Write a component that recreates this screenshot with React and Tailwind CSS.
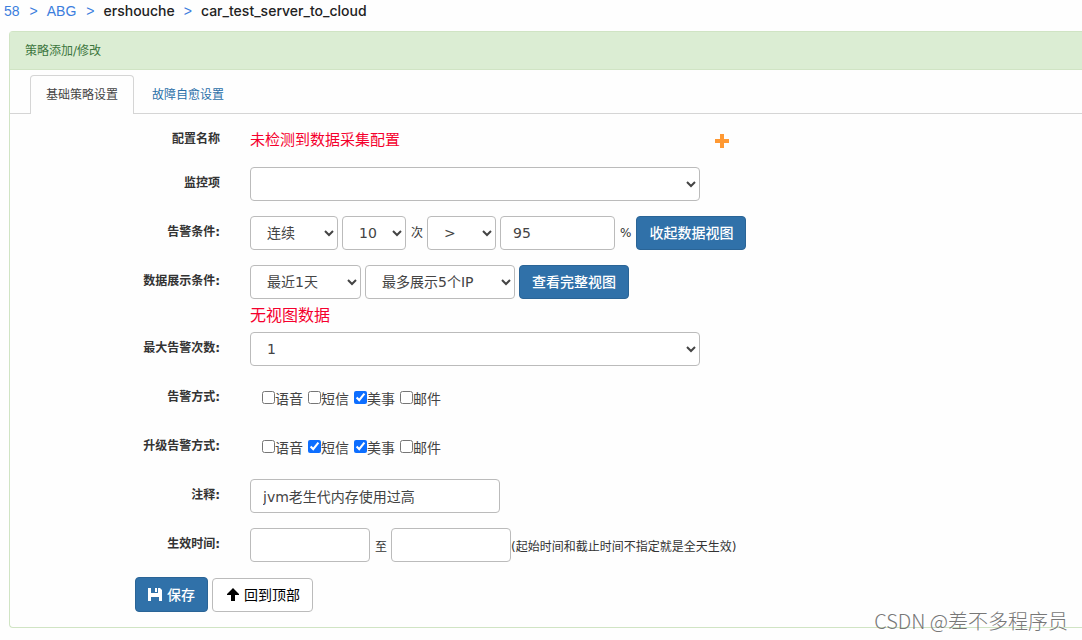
import React, { useState } from 'react'
import clsx from 'clsx'

const controlClass =
  'h-[34px] rounded-sm border border-[#bbb] bg-white px-3 text-sm text-[#444] outline-none'

const methods = ['语音', '短信', '美事', '邮件']

const Row = ({ label, htmlFor, labelId, children }) => (
  <div className="mb-[15px] flex">
    {htmlFor ? (
      <label htmlFor={htmlFor} className="w-[210px] shrink-0 pt-2 text-right text-xs leading-[17px] font-bold">
        {label}
      </label>
    ) : (
      <div id={labelId} className="w-[210px] shrink-0 pt-2 text-right text-xs leading-[17px] font-bold">
        {label}
      </div>
    )}
    <div className="min-w-0 flex-1 pl-[30px]">{children}</div>
  </div>
)

const Select = ({ className, options, ...props }) => (
  <select className={clsx(controlClass, className)} {...props}>
    {options.map((option) => (
      <option key={option}>{option}</option>
    ))}
  </select>
)

const PrimaryButton = ({ className, children }) => (
  <button
    type="button"
    className={clsx(
      'flex items-center rounded-sm border border-[#2a6496] bg-[#3071a9] px-3 text-sm font-medium text-white',
      className
    )}
  >
    {children}
  </button>
)

const MethodGroup = ({ labelId, initial }) => {
  const [selected, setSelected] = useState(initial)

  const toggle = (method) => {
    setSelected(
      selected.includes(method) ? selected.filter((m) => m !== method) : [...selected, method]
    )
  }

  return (
    <div role="group" aria-labelledby={labelId} className="flex h-[34px] items-center gap-[5px] pt-[2px] pl-3">
      {methods.map((method) => (
        <label key={method} className="flex items-center text-sm text-[#444]">
          <input
            type="checkbox"
            className="mb-[3px] h-[13px] w-[13px] accent-[#0d6eff]"
            checked={selected.includes(method)}
            onChange={() => toggle(method)}
          />
          {method}
        </label>
      ))}
    </div>
  )
}

export default function App() {
  const [threshold, setThreshold] = useState('95')
  const [remark, setRemark] = useState('jvm老生代内存使用过高')

  return (
    <div className="relative overflow-hidden bg-[#fefefe] pb-3 font-['DejaVu_Sans','Noto_Sans_CJK_SC',sans-serif] text-xs text-[#333]">
      {/*breadcrumb*/}
      <nav className="flex h-[31px] gap-[9px] pl-1 font-['Liberation_Sans',sans-serif] text-sm leading-[22px] text-[#3b7ddd]">
        <a href="#58" className="pr-px">58</a>
        <span>&gt;</span>
        <a href="#abg" className="pr-px">ABG</a>
        <span>&gt;</span>
        <span className="font-['Inter',sans-serif] font-medium text-[#222]">ershouche</span>
        <span>&gt;</span>
        <span className="font-['Inter',sans-serif] font-medium text-[#222]">car_test_server_to_cloud</span>
      </nav>

      <div className="ml-[9px] rounded-l-sm border border-r-0 border-[#d0e4c4]">
        <h3 className="border-b border-[#d0e4c4] bg-[#dbedd3] px-[15px] pt-[11px] pb-[9px] leading-[17px] text-[#3c763d]">
          策略添加/修改
        </h3>

        {/*tabs*/}
        <div role="tablist" className="mt-[5px] flex border-b border-[#d5d5d5] pl-5">
          <button
            type="button"
            role="tab"
            aria-selected="true"
            className="-mb-px h-[39px] rounded-t-sm border border-b-0 border-[#d5d5d5] bg-[#fefefe] px-[15px] text-[#444]"
          >
            基础策略设置
          </button>
          <button type="button" role="tab" aria-selected="false" className="ml-[2px] px-4 pt-[2px] text-[#2a6fa8]">
            故障自愈设置
          </button>
        </div>

        {/*form*/}
        <form className="pt-[9px] pb-[15px]">
          <Row label="配置名称">
            <div className="flex h-[29px] items-center pt-[6px]">
              <span className="w-[464px] text-[15px] text-[#f5002d]">未检测到数据采集配置</span>
              <button type="button" aria-label="添加配置">
                <svg className="h-4 w-4" viewBox="0 0 16 16" fill="#ff9933">
                  <path d="M6 1h4v5h5v4h-5v5H6v-5H1V6h5z" />
                </svg>
              </button>
            </div>
          </Row>
          <Row label="监控项" htmlFor="item">
            <Select id="item" className="w-full max-w-[450px]" options={['']} />
          </Row>
          <Row label="告警条件:" labelId="condition">
            <div role="group" aria-labelledby="condition" className="flex items-center gap-1">
              <Select aria-label="连续" className="w-[88px]" options={['连续', '累计']} />
              <Select aria-label="次数" className="w-16" options={['10', '5', '3', '1']} />
              <span className="pl-px">次</span>
              <Select aria-label="比较符" className="w-[69px]" options={['>', '<', '=']} />
              <input
                type="text"
                aria-label="阈值"
                className={clsx(controlClass, 'w-[115px]')}
                value={threshold}
                onChange={(e) => setThreshold(e.target.value)}
              />
              <span className="px-px">%</span>
              <PrimaryButton className="h-[34px]">收起数据视图</PrimaryButton>
            </div>
          </Row>
          <Row label="数据展示条件:" labelId="display">
            <div role="group" aria-labelledby="display" className="flex items-center gap-1">
              <Select aria-label="时间范围" className="w-[111px]" options={['最近1天', '最近7天']} />
              <Select aria-label="展示数量" className="w-[150px]" options={['最多展示5个IP', '最多展示10个IP']} />
              <PrimaryButton className="h-[34px]">查看完整视图</PrimaryButton>
            </div>
            <p className="-mb-[15px] h-[33px] text-base leading-[33px] text-[#f5002d]">无视图数据</p>
          </Row>
          <Row label="最大告警次数:" htmlFor="max">
            <Select id="max" className="w-full max-w-[450px]" options={['1', '2', '3']} />
          </Row>
          <Row label="告警方式:" labelId="method">
            <MethodGroup labelId="method" initial={['美事']} />
          </Row>
          <Row label="升级告警方式:" labelId="upgrade">
            <MethodGroup labelId="upgrade" initial={['短信', '美事']} />
          </Row>
          <Row label="注释:" htmlFor="remark">
            <input
              id="remark"
              type="text"
              className={clsx(controlClass, 'block w-[250px]')}
              value={remark}
              onChange={(e) => setRemark(e.target.value)}
            />
          </Row>
          <Row label="生效时间:" labelId="period">
            <div role="group" aria-labelledby="period" className="flex items-center">
              <input type="text" aria-label="起始时间" className={clsx(controlClass, 'w-[120px]')} />
              <span className="pt-1 pr-1 pl-[5px]">至</span>
              <input type="text" aria-label="截止时间" className={clsx(controlClass, 'w-[120px]')} />
              <span className="pt-1">(起始时间和截止时间不指定就是全天生效)</span>
            </div>
          </Row>

          <div className="flex items-end gap-1 pl-[125px]">
            <PrimaryButton className="h-[35px] gap-[5px]">
              <svg className="h-[14px] w-[14px]" viewBox="0 0 14 14" fill="currentColor">
                <path d="M0 0h3v5h7V0h2l2 2v11h-3V9H3v4H0zM7 0h2v4H7z" />
              </svg>
              保存
            </PrimaryButton>
            <button
              type="button"
              className="flex h-[34px] items-center gap-[5px] rounded-sm border border-[#bbb] bg-white px-3 text-sm text-black"
            >
              <svg className="h-[14px] w-[14px]" viewBox="0 0 14 14" fill="currentColor">
                <path d="M8 0l6 6v1h-4v6H6V7H2V6z" />
              </svg>
              回到顶部
            </button>
          </div>
        </form>
      </div>

      <div className="pointer-events-none absolute right-[14px] bottom-[7px] font-['Noto_Sans_CJK_SC',sans-serif] text-xl leading-6 font-light text-[#777]">
        CSDN @差不多程序员
      </div>
    </div>
  )
}
